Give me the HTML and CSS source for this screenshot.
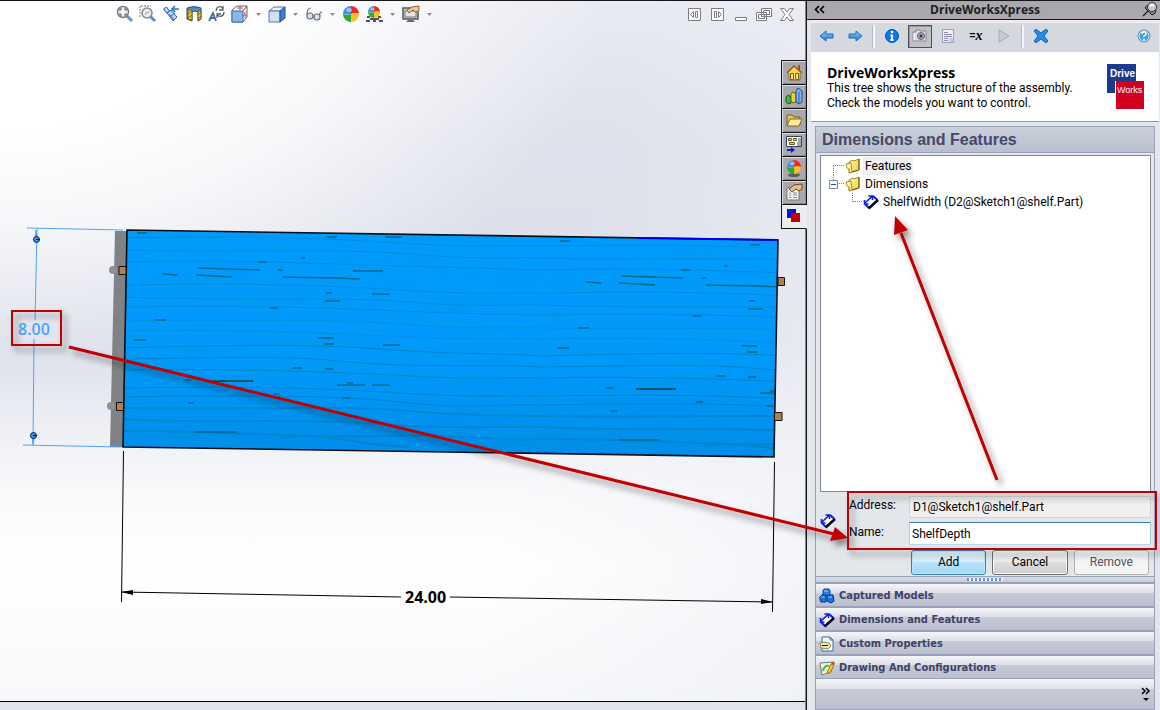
FILE: index.html
```html
<!DOCTYPE html>
<html lang="en">
<head>
<meta charset="utf-8">
<title>DriveWorksXpress</title>
<link rel="stylesheet" href="styles.css">
</head>
<body>
<svg class="defs" aria-hidden="true">
  <defs>
    <linearGradient id="blue" x1="0" y1="0" x2="0" y2="1"><stop offset="0" stop-color="#8fd0fb"/><stop offset="1" stop-color="#1874d2"/></linearGradient>
    <linearGradient id="gold" x1="0" y1="0" x2="1" y2="1"><stop offset="0" stop-color="#fffbc4"/><stop offset="1" stop-color="#eccb35"/></linearGradient>
    <symbol id="ball" viewBox="0 0 16 16">
      <path d="M8 8V0A8 8 0 0 0 0 8Q4 9 8 8" fill="#3f8fe6"/><path d="M8 8V0A8 8 0 0 1 16 8Q12 6 8 8" fill="#ee2a24"/>
      <path d="M8 8Q4 10 0 8A8 8 0 0 0 8 16Q9 12 8 8" fill="#2fa835"/><path d="M8 8Q12 6 16 8A8 8 0 0 1 8 16Q9 12 8 8" fill="#f6c21c"/>
      <ellipse cx="6" cy="4" rx="3" ry="2" fill="#fff" opacity=".45"/>
    </symbol>
    <symbol id="caret" viewBox="0 0 9 18"><path d="M2 8h5l-2.500 3z" fill="#8b8d92"/></symbol>
    <symbol id="folder" viewBox="0 0 16 16">
      <path d="M4 4l4-2 1 1 5-2v11l-10 3z" fill="url(#gold)" stroke="#a88b12"/><path d="M1 6l5-1 1 9-2 1-1-4-2-1z" fill="#fff6a0" stroke="#b0911a"/><path d="M14 1v11l-7 2" fill="none" stroke="#6b5a10"/>
    </symbol>
    <symbol id="dimension" viewBox="0 0 16 16">
      <path d="M2 10l7-7 5 4-8 7z" fill="#fff"/><path d="M2 9L9 2.500M1.500 6v4h4M5.500 2h4v4" fill="none" stroke="#0a1fe0" stroke-width="1.600"/><path d="M10 2l4.500 4M2 10l4 4" stroke="#0a1fe0" stroke-width="2"/><path d="M5.500 14.500L15 6" fill="none" stroke="#050520" stroke-width="2.600"/>
    </symbol>
    <symbol id="cube" viewBox="0 0 18 18"><path d="M1 5l5-4h10v11l-4 5H1z" fill="#f8fafc" stroke="#5c6470"/><path d="M1 6h11v11H1z" fill="#86b9ee" stroke="#3b6da8"/><path d="M12 6l4-5" stroke="#5c6470"/></symbol>
  </defs>
</svg>
<div class="app">
  <main class="viewport">
    <svg class="scene" width="806" height="700" role="img" aria-label="Shelf model with dimensions">
      <defs>
        <clipPath id="board"><path d="M127 230L778 240 774 457 123 447z"/></clipPath>
        <linearGradient id="boardFill" x1="0" y1="0" x2="0" y2="1"><stop offset="0" stop-color="#009bff"/><stop offset=".6" stop-color="#0099fc"/><stop offset="1" stop-color="#008ceb"/></linearGradient>
        <filter id="fibre" x="0" y="0" width="100%" height="100%"><feTurbulence type="fractalNoise" baseFrequency=".008 .22" numOctaves="3" seed="4"/><feColorMatrix values="0 0 0 0 0  0 0 0 0 .35  0 0 0 0 .65  1.200 0 0 0 -.42"/></filter>
        <g id="grain" fill="none">
          <g stroke="#0074a8" stroke-opacity=".55">
            <path d="M120 238c140 -2 200 0 280 5s100 2 143 3M120 250c110 3 220 -2 290 4s90 3 133 4M120 262c120 -3 200 2 280 4s100 3 143 4M120 285c140 -2 200 0 280 5s100 2 143 3M120 297c110 4 220 -1 290 5s90 2 133 3M120 307c130 -2 210 1 280 4s100 3 143 4" stroke-opacity=".35"/>
            <path d="M120 320c140 2 200 -2 280 4s100 3 143 4M120 331c110 -3 220 3 290 6s90 1 133 2" stroke-opacity=".25"/>
            <path d="M120 348c100 -3 200 -4 260 1s120 4 163 7M120 359c140 -2 170 -3 230 3s150 2 193 5M120 370c110 -2 220 2 290 6s90 1 133 2M120 388c140 -2 200 0 280 5s100 2 143 3M120 397c110 -2 220 -2 280 5s100 2 143 3"/>
            <path d="M120 408c110 2 220 -3 290 3s90 4 133 5M120 419c90 5 180 -1 260 5s110 2 163 3M120 431c100 -1 180 8 260 5s120 6 163 3M280 438c50 -6 80 8 130 9" stroke-width="2" stroke-opacity=".42"/>
          </g>
          <path stroke="#005c74" stroke-opacity=".8" stroke-width="1.400" d="M198 268l62 2M196 275l36 2M163 274l15 1M283 277l50 1 27 1M353 271h30M258 262h9M278 270h5M301 258h4M327 237h10M385 237h17M137 233h10M372 294h17M326 293h6M325 301h15M270 308h8M155 320h11M318 338h16M324 344h10M383 345h17M134 340h12M325 369h8M293 368h9M337 385h28M372 385h17M347 383h6M343 398h7M273 394h7M188 403h6M195 432h42M183 380h8"/>
          <path stroke="#005464" stroke-width="2" d="M213 381h40"/>
        </g>
      </defs>
      <path d="M115 231h12l-4 216h-13z" fill="#808285"/><circle cx="113" cy="270" r="4" fill="#8e9093"/><circle cx="111" cy="406" r="4" fill="#8e9093"/>
      <g clip-path="url(#board)">
        <path d="M120 226h660v234H120z" fill="url(#boardFill)"/>
        <rect x="120" y="228" width="660" height="232" filter="url(#fibre)" opacity=".4"/>
        <use href="#grain"/><use href="#grain" x="423" y="8"/>
      </g>
      <path d="M127 230L778 240 774 457 123 447z" fill="none" stroke="#04101c" stroke-width="1.600"/>
      <path d="M638 238l140 2" stroke="#0000e8" stroke-width="2"/>
      <g fill="#b08150" stroke="#17120c"><path d="M119 266.500h7v8h-7zM116.500 402.500h7v8h-7zM778 277.500h6.500v8H778zM774.500 412.500h7.500v8h-7.500z"/></g>
      <g stroke="#4da3ff" fill="none"><path d="M27 228L123 230M23 445L121 447M37 229L35 320M34 339L33 445"/><path d="M35 240l1-10 2 10M32 435l1 9 2-9" fill="#4da3ff"/></g>
      <g fill="#3c94f4" stroke="#071c33"><circle cx="36.500" cy="239.500" r="3"/><circle cx="33.500" cy="435.500" r="3"/><path d="M36 239.500h4M33 435.500h4"/></g>
      <text class="dim dim-selected" x="18" y="335">8.00</text>
      <g stroke="#000" fill="#000"><path d="M123.500 451L121.500 602M774.500 462L772.500 612M122 592L401 597M450 597L772 602" fill="none"/><path stroke="none" d="M121 592l12-2v5zM773 602l-12-3v5z"/></g>
      <text class="dim" x="405" y="603">24.00</text>
    </svg>
    <header class="view-bar">
      <div class="tools">
        <button class="tool" aria-label="Zoom to fit"><svg width="18" height="18"><path d="M10 10l6 6" stroke="#5f8fd0" stroke-width="3"/><circle cx="7" cy="7" r="5.500" fill="#eef3fa" stroke="#777b82" stroke-width="1.500"/><path d="M4 6V4h2M8 4h2v2M10 8v2H8M6 10H4V8" fill="none" stroke="#555"/></svg></button>
        <button class="tool" aria-label="Zoom to area"><svg width="18" height="18"><path d="M1 12V1h11" fill="none" stroke="#777" stroke-dasharray="2 1"/><path d="M11 11l5 5" stroke="#5f8fd0" stroke-width="3"/><circle cx="8" cy="8" r="5" fill="#e7ebf0" stroke="#85898f" stroke-width="1.500"/><path d="M6 9l4-2" stroke="#999"/></svg></button>
        <button class="tool" aria-label="Previous view"><svg width="18" height="18"><path d="M1.500 4l3-2 3 4-3 2zM5 8l4-3 6 7-4 4z" fill="#b5d4f5" stroke="#2a67b4"/><path d="M9 11l4-3M7 9l5 6" stroke="#2a67b4"/><path d="M17 4h-6M13 1l-3 3 3 3" fill="none" stroke="#2876d0" stroke-width="1.600"/></svg></button>
        <button class="tool" aria-label="Section view"><svg width="18" height="18"><path d="M2 3q7-3 14 0v11l-3 2V7q-3-2-6 0v9l-5-2z" fill="#4e8bd2" stroke="#284f80"/><path d="M3 5h4v10l-4-1zM13 6h3v8l-3 1z" fill="#f0ce32" stroke="#7b6510"/><path d="M3 9l4-3M3 13l4-3M13 10l3-3M13 14l3-3" stroke="#7b6510"/></svg></button>
        <button class="tool" aria-label="Dynamic annotation views"><svg width="18" height="18"><path d="M1 16l4-8 3 8M2 13h5" fill="none" stroke="#416cb0" stroke-width="1.800"/><path d="M8 6c1-6 6-5 7-2M15 1v4h-4M16 7c0 5-5 5-7 3M9 13v-4h4" fill="none" stroke="#5b5e63" stroke-width="1.300"/></svg></button>
        <button class="tool" aria-label="View orientation"><svg width="18" height="18"><use href="#cube"/><path d="M6 3h6M9 1v4M12 10h4M14 7v6" stroke="#e04848"/></svg></button>
        <button class="drop" aria-label="View orientation menu"><svg width="9" height="18"><use href="#caret"/></svg></button>
        <button class="tool" aria-label="Display style"><svg width="18" height="18"><path d="M1 6l5-4h11l-5 4z" fill="#eef6fd" stroke="#60728a"/><path d="M1 6h11v11H1z" fill="#cfe2f7" stroke="#5b7799"/><path d="M12 6l5-4v11l-5 4z" fill="#3c7edb" stroke="#284d87"/></svg></button>
        <button class="drop" aria-label="Display style menu"><svg width="9" height="18"><use href="#caret"/></svg></button>
        <button class="tool" aria-label="Hide or show items"><svg width="18" height="18"><g fill="#d9e3ec" stroke="#6b7178" stroke-width="1.200"><circle cx="5" cy="11" r="3"/><circle cx="12" cy="12" r="3"/><path d="M2 10q0-7 4-7M8 11h1M15 11q-1-4 2-4" fill="none"/></g></svg></button>
        <button class="drop" aria-label="Hide or show menu"><svg width="9" height="18"><use href="#caret"/></svg></button>
        <button class="tool" aria-label="Edit appearance"><svg width="18" height="18"><use href="#ball" x="1" y="1" width="16" height="16"/></svg></button>
        <button class="tool" aria-label="Apply scene"><svg width="18" height="18"><path d="M2 10h14l2 7H0z" fill="#eee"/><path d="M2 11h3v2H2zM8 13h3v2H8zM13 11h3v2h-3zM1 15h4v2H1zM14 15h4v2h-4zM5 13h3v2H5zM11 13h3v2h-3zM8 15h3v2H8z" fill="#555"/><use href="#ball" x="3" y="1" width="12" height="12"/></svg></button>
        <button class="drop" aria-label="Scene menu"><svg width="9" height="18"><use href="#caret"/></svg></button>
        <button class="tool" aria-label="View settings"><svg width="18" height="18"><path d="M1 3h15v11H1z" fill="#c9cbce" stroke="#55585c" stroke-width="1.500"/><path d="M3 6h11v6H3z" fill="#e4e6e9" stroke="#777"/><path d="M6 15h5l2 2H4z" fill="#666"/><path d="M5 5l5-3 7-1v5l-4 1-2-2-4 3z" fill="#eec98f" stroke="#8b6637"/></svg></button>
        <button class="drop" aria-label="View settings menu"><svg width="9" height="18"><use href="#caret"/></svg></button>
      </div>
      <div class="tools window-tools">
        <button class="tool" aria-label="Collapse left"><svg width="18" height="18"><path d="M2.500 3.500h12v12h-12zM9.500 6.500h2v6h-2zM7.500 6.500v6l-3-3z"/></svg></button>
        <button class="tool" aria-label="Collapse right"><svg width="18" height="18"><path d="M2.500 3.500h12v12h-12zM5.500 6.500h2v6h-2zM9.500 6.500v6l3-3z"/></svg></button>
        <button class="tool" aria-label="Minimize"><svg width="18" height="18"><path d="M3.500 12.500h11v3h-11z"/></svg></button>
        <button class="tool" aria-label="Restore"><svg width="18" height="18"><path d="M6.500 3.500h10v8h-10zM8.500 5.500h6v4h-6zM1.500 7.500h10v8h-10zM3.500 9.500h6v4h-6z"/></svg></button>
        <button class="tool" aria-label="Close document"><svg width="18" height="18"><path d="M2.500 3.500h4l2.500 3.500 2.500-3.500h4l-4.500 6 4.500 6h-4l-2.500-3.500-2.500 3.500h-4l4.500-6z"/></svg></button>
      </div>
    </header>
    <nav class="side-tabs" aria-label="Task pane">
      <button class="side-tab" aria-label="Resources"><svg width="18" height="18"><path d="M13 2h2v6h-2z" fill="#c23a24"/><path d="M4 9h11v8H4z" fill="#fff4b4" stroke="#806020"/><path d="M2 10l7-7 8 7" fill="#f8d44a" stroke="#8a5a10" stroke-width="1.400"/><path d="M5.500 10.500h3v6h-3zM10.500 10.500h3v6h-3z" fill="#ffe36b" stroke="#805e1b"/></svg></button>
      <button class="side-tab" aria-label="Design library"><svg width="18" height="18"><path d="M1 10l2-2 3 2v6l-3 1-2-2z" fill="#35b847" stroke="#145d21"/><path d="M6 7l2-2 3 2v8l-3 1-2-2z" fill="#f0cf3d" stroke="#74600f"/><path d="M11 4l2-3 4 3v11l-3 2-3-2z" fill="#7fb2ee" stroke="#184d86"/><path d="M14 5v11" stroke="#2665ae"/></svg></button>
      <button class="side-tab" aria-label="File explorer"><svg width="18" height="18"><path d="M2 14V4h5l2 2h6v8z" fill="#eac356" stroke="#795912"/><path d="M2 15l3-7h12l-3 7z" fill="#ffeaa4" stroke="#886718"/></svg></button>
      <button class="side-tab" aria-label="View palette"><svg width="18" height="18"><path d="M1.500 1.500h15v10h-15z" fill="#fff" stroke="#33445f"/><path d="M3.500 3.500h3v2h-3zM8.500 3.500h3v2h-3zM4.500 7.500h5v2h-5z" fill="#f4d328" stroke="#6b5d18"/><path d="M13 4h3M13 6h3M12 8h4M12 10h4" stroke="#3b5680"/><path d="M2 15h6" stroke="#0718df" stroke-width="2"/><path d="M6 12l4 3-4 3z" fill="#0718df"/></svg></button>
      <button class="side-tab" aria-label="Appearances"><svg width="18" height="18"><ellipse cx="9" cy="16" rx="6" ry="2" fill="#5d5d61"/><use href="#ball" x="2" y="1" width="14" height="14"/></svg></button>
      <button class="side-tab" aria-label="Custom properties"><svg width="18" height="18"><path d="M2 5h12v12H2z" fill="#f8f8f8" stroke="#777"/><path d="M4 10h2M8 10h4M4 12h2M8 12h4M4 14.500h2M8 14.500h4" stroke="#888"/><path d="M4 6l5-4 8-1v5l-3 2-3-2-4 3z" fill="#e8bf8c" stroke="#704724"/></svg></button>
      <button class="side-tab side-tab-active" aria-label="DriveWorksXpress"><svg width="18" height="18"><path d="M2 2h9v9H2z" fill="#0014c8"/><path d="M6 6h9v9H6z" fill="#c40000"/></svg></button>
    </nav>
    <div class="status"></div>
  </main>

  <aside class="panel">
    <header class="title-bar">
      <button class="title-button" aria-label="Collapse pane"><svg width="18" height="16"><path d="M8 4L4.500 7.500 8 11M13 4L9.500 7.500 13 11" fill="none" stroke="#000" stroke-width="1.600"/></svg></button>
      <h1>DriveWorksXpress</h1>
      <button class="title-button" aria-label="Pin pane"><svg width="18" height="18"><path d="M2 15l5-5" stroke="#222" stroke-width="1.500"/><path d="M4 7l7 7q4-1 4-5L9 4Q5 4 4 7z" fill="#878a96" stroke="#222"/><circle cx="11" cy="6" r="4.500" fill="#c9cad8" stroke="#333"/><path d="M9 5q2-2 4 0" stroke="#fff" stroke-width="2" fill="none"/></svg></button>
    </header>
    <div class="command-bar">
      <button class="cmd" aria-label="Back"><svg width="18" height="18"><path d="M2 9l6-5v3h7v4H8v3z" fill="url(#blue)" stroke="#1c69c0"/></svg></button>
      <button class="cmd" aria-label="Forward"><svg width="18" height="18"><path d="M16 9l-6-5v3H3v4h7v3z" fill="url(#blue)" stroke="#1c69c0"/></svg></button>
      <span class="sep"></span>
      <button class="cmd" aria-label="Information"><svg width="18" height="18"><circle cx="9" cy="9" r="6.500" fill="#0878e3" stroke="#0056b8"/><path d="M9 7.500v6M7.500 8.500h2M7.500 13h3" stroke="#fff" stroke-width="1.800"/><circle cx="9" cy="5" r="1.300" fill="#fff"/></svg></button>
      <button class="cmd cmd-pressed" aria-label="Capture"><svg width="18" height="18"><path d="M2 5h3V3h4v1h6v10H2z" fill="#dedde5" stroke="#8b8994"/><circle cx="10" cy="9" r="3.500" fill="#aaa9b2" stroke="#666"/><circle cx="10" cy="9" r="1.500" fill="#333"/><path d="M3 6v7" stroke="#fff"/></svg></button>
      <button class="cmd" aria-label="Form"><svg width="18" height="18"><path d="M3.500 2.500h11v13h-11z" fill="#f0effa" stroke="#a19fc0"/><path d="M5 5.500h4M5 7.500h8M5 9.500h8M5 11.500h4M5 13.500h4" stroke="#8b89b5"/><path d="M10 11h4v4h-4z" fill="#c9c8de"/></svg></button>
      <button class="cmd cmd-rule" aria-label="Rules">=<i>x</i></button>
      <button class="cmd" aria-label="Run" disabled><svg width="18" height="18"><path d="M4 3l10 6-10 6z" fill="#c7cacf" stroke="#abadb1"/></svg></button>
      <span class="sep"></span>
      <button class="cmd" aria-label="Close"><svg width="18" height="18"><path d="M2 4l2-2 5 4 5-4 2 2-4 5 4 5-2 2-5-4-5 4-2-2 4-5z" fill="#238be8" stroke="#0d64bd"/></svg></button>
      <button class="cmd cmd-help" aria-label="Help"><svg width="18" height="18"><circle cx="9" cy="9" r="6" fill="#399bea" stroke="#6d8499"/><circle cx="9" cy="9" r="5" fill="none" stroke="#dceefa"/><path d="M7 7q0-2 2-2t2 2q0 1-2 2v1M9 11.500v1.500" fill="none" stroke="#fff" stroke-width="1.500"/></svg></button>
    </div>
    <section class="intro">
      <div>
        <h2>DriveWorksXpress</h2>
        <p>This tree shows the structure of the assembly.<br>Check the models you want to control.</p>
      </div>
      <svg class="logo" width="38" height="46" role="img" aria-label="Drive Works"><path d="M0 0h29v29H0z" fill="#1d3b8b"/><path d="M8 17h30v28H8z" fill="#fff"/><path d="M9 17h28v28H9z" fill="#d2001f"/><text x="3" y="13">Drive</text><text class="logo-works" x="10" y="29">Works</text></svg>
    </section>

    <section class="box">
      <h3 class="box-title">Dimensions and Features</h3>
      <div class="box-body">
        <ul class="tree">
          <li class="node"><svg class="lines" width="24" height="18"><path d="M12.500 9v9M12 8.500h12"/></svg><svg width="16" height="16"><use href="#folder"/></svg><span class="node-text node-hot">Features</span></li>
          <li class="node"><svg class="lines" width="24" height="18"><path d="M12.500 0v5M18 8.500h6"/><path class="expander" d="M8.500 5.500h8v8h-8z"/><path class="expander minus" d="M10 9.500h5"/></svg><svg width="16" height="16"><use href="#folder"/></svg><span class="node-text">Dimensions</span></li>
          <li class="node"><svg class="lines" width="42" height="18"><path d="M31.500 0v9M32 8.500h10"/></svg><svg width="16" height="16"><use href="#dimension"/></svg><span class="node-text">ShelfWidth (D2@Sketch1@shelf.Part)</span></li>
        </ul>
        <form class="form">
          <svg class="form-icon" width="16" height="16"><use href="#dimension"/></svg>
          <label for="address">Address:</label><input class="field field-readonly" id="address" value="D1@Sketch1@shelf.Part" readonly>
          <label for="name">Name:</label><input class="field field-name" id="name" value="ShelfDepth">
          <div class="actions"><button class="btn btn-default" type="button">Add</button><button class="btn" type="button">Cancel</button><button class="btn" type="button" disabled>Remove</button></div>
        </form>
      </div>
      <div class="splitter"><span class="grip"></span></div>
      <nav class="stack">
        <button class="stack-item"><svg width="16" height="16"><path d="M5 1h5l1 2v5H4V3z" fill="#2580e8" stroke="#0b3f91"/><path d="M1 9l2-2h4v7H2l-1-2zM8 9l2-2h4l1 6-3 2-4-2z" fill="#1777e8" stroke="#082f7c"/><path d="M5 3h4M2 9h4M9 9h4" stroke="#8ed0ff"/></svg>Captured Models</button>
        <button class="stack-item"><svg width="16" height="16"><use href="#dimension"/></svg>Dimensions and Features</button>
        <button class="stack-item"><svg width="16" height="16"><path d="M3 1h8l3 3v11H3z" fill="#f5faff" stroke="#386ca6"/><path d="M11 1v3h3" fill="none" stroke="#386ca6"/><path d="M1 7l4-1 5 1 2 3-3 3-7-1z" fill="#e9e7a4" stroke="#8a8950"/><path d="M3 9.500h6" stroke="#222"/></svg>Custom Properties</button>
        <button class="stack-item"><svg width="16" height="16"><path d="M1 3l14-1-3 10-9 3z" fill="#edf3e9" stroke="#777"/><path d="M4 11q1-6 6-5" fill="none" stroke="#4dbb32" stroke-width="2"/><path d="M8 13l4-9 3 1-4 8z" fill="#f5cc24" stroke="#a07814"/><path d="M12 4l1-2 3 1-1 2z" fill="#d34232"/></svg>Drawing And Configurations</button>
      </nav>
      <footer class="overflow"><button class="more" aria-label="More groups"><svg width="14" height="16"><path d="M3 2l3 3-3 3M7 2l3 3-3 3" fill="none" stroke="#000" stroke-width="1.500"/><path d="M4 12h6l-3 3z"/></svg></button></footer>
    </section>
  </aside>

  <svg class="callouts" width="1160" height="710" aria-hidden="true">
    <g fill="none" stroke="#c00000"><path d="M12 311h49v34H12zM848 492h308v57H848z" stroke-width="2"/><path d="M69 347L834 534M997 480L901 233" stroke-width="3"/></g>
    <path d="M848 538l-18 3 5-14zM895 216l13 14-14 5z" fill="#c00000"/>
  </svg>
</div>
</body>
</html>
```
FILE: styles.css
```css
* { box-sizing: border-box; }
body { margin: 0; font: 12px/15px Roboto, "Noto Sans", sans-serif; color: #000; }
button { margin: 0; padding: 0; border: 0; background: none; font: inherit; color: inherit; }
h1, h2, h3, p, ul { margin: 0; padding: 0; }
svg { display: block; flex: none; }
.defs { position: absolute; width: 0; height: 0; }

.app { position: relative; display: grid; grid-template-columns: minmax(0, 1fr) 354px; min-height: 100vh; overflow: hidden; border-top: 1px solid #16161a; }

/* Model viewport */
.viewport {
  position: relative; display: flex; flex-direction: column; justify-content: space-between; border-right: 1px solid #85868a;
  background:
    radial-gradient(ellipse 75% 52% at 0 0, #fff 35%, rgba(255,255,255,.75) 60%, rgba(255,255,255,0) 100%),
    linear-gradient(285deg, rgba(240,241,246,.8) 0%, rgba(240,241,246,0) 35%),
    linear-gradient(180deg, #e9ebf2 0%, #dfe1eb 20%, #dcdfea 48%, #eceef4 59%, #fafafc 70%, #fff 80%, #f7f8fa 100%);
}
.scene { position: absolute; left: 0; top: -1px; }
.dim { font: bold 16px "Open Sans", sans-serif; }
.dim-selected { fill: #4da3ff; font-weight: 600; }
.view-bar { position: relative; display: flex; justify-content: space-between; padding: 4px 9px 0 116px; }
.tools { display: flex; gap: 5px; }
.tool { width: 18px; height: 18px; }
.drop { width: 9px; height: 18px; }
.window-tools path { fill: #fdfdfd; stroke: #7d7f85; }
.side-tabs { position: absolute; right: -2px; top: 59px; z-index: 2; display: flex; flex-direction: column; width: 26px; border-left: 1px solid #16161a; border-top: 1px solid #16161a; }
.side-tab { display: flex; align-items: center; justify-content: center; height: 24px; padding-bottom: 1px; background: #a9a9ad; border-bottom: 1px solid #16161a; border-right: 1px solid #16161a; box-shadow: inset 1px 1px #dedee2, inset -1px -1px #88888c; }
.side-tab-active { background: #ededf0; border-right-color: #ededf0; box-shadow: none; }
.status { height: 9px; background: #e1e4ea; border-top: 1px solid #000; }

/* Task pane */
.panel { display: flex; flex-direction: column; min-width: 0; border-left: 1px solid #16161a; background: #e3e6eb; }
.title-bar { display: flex; justify-content: space-between; align-items: center; height: 19px; padding: 0 1px 0 4px; background: #a9a9ad; border-bottom: 1px solid #16161a; }
.title-bar h1 { font: bold 12px/16px "Open Sans", "Noto Sans", sans-serif; color: #1d1d22; }
.title-button { width: 18px; height: 18px; }
.command-bar { display: flex; align-items: center; gap: 4px; height: 32px; margin: 0 1px 0 4px; padding: 0 3px 3px 4px; background: #d5d9df; border-top: 3px solid #efebf1; }
.cmd { display: flex; align-items: center; justify-content: center; width: 24px; height: 23px; }
.cmd-pressed { background: #bec2c7; border: 1px solid #4e5256; box-shadow: inset 1px 1px #94989d; }
.cmd-rule { font: bold 10px/12px "Liberation Sans", sans-serif; }
.cmd-rule i { font: italic bold 14px/12px "Liberation Serif", serif; }
.cmd-help { margin-left: auto; }
.sep { width: 5px; height: 23px; background: linear-gradient(90deg, transparent 1px, #b5bac2 1px, #b5bac2 2px, #f6f7f9 2px, #f6f7f9 4px, transparent 4px); }
.intro { display: flex; justify-content: space-between; height: 70px; margin: 0 1px 0 4px; padding: 12px 14px 0 16px; background: #fff; border-bottom: 1px solid #98999d; }
.intro h2 { font: bold 14px/17px "Open Sans", "Noto Sans", sans-serif; }
.logo text { font: bold 10px "Liberation Sans Narrow", "Liberation Sans", sans-serif; fill: #fff; }
.logo .logo-works { font-weight: normal; font-size: 9px; }

.box { flex: 1; display: flex; flex-direction: column; margin: 4px 5px 0 8px; border: 1px solid #9ba0bc; }
.box-title { height: 26px; padding-left: 6px; font: bold 16px/25px "Liberation Sans", sans-serif; color: #44486a; background: linear-gradient(#cbd0dd, #b9bfcc); border: 1px solid #9ba0bc; border-width: 0 0 1px; }
.box-body { flex: 1; display: flex; flex-direction: column; padding: 2px 3px 0 4px; }
.tree { flex: 1; padding-top: 1px; list-style: none; background: #fff; border: 1px solid #828790; }
.node { display: flex; align-items: center; height: 18px; }
.node-text { margin-left: 2px; padding: 0 2px; line-height: 18px; }
.node-hot { background: #f0f0f0; }
.lines path { fill: none; stroke: #808080; stroke-dasharray: 1 1; }
.lines .expander { fill: #fff; stroke: #7f8ba0; stroke-dasharray: none; }
.lines .minus { stroke: #24469a; }

.form { display: grid; grid-template-columns: 29px 60px minmax(0, 1fr); row-gap: 4px; align-items: center; padding: 4px 0 1px; }
.form-icon { grid-row: 1 / 3; }
.form label { grid-column: 2; padding-bottom: 3px; }
.field { grid-column: 3; width: 100%; height: 23px; padding: 0 2px; font: inherit; color: #000; background: #fff; border: 1px solid #3d7bad; border-color: #3d7bad #a4c9e3 #b7d9ed #b5cfe7; outline: 0; }
.field-readonly { height: 22px; padding-left: 3px; background: #f0f0f0; border-color: #d5d5d8; }
.actions { grid-column: 3; display: flex; gap: 6px; padding: 1px 2px 0; }
.btn { flex: 1; height: 25px; border: 1px solid #707070; border-radius: 3px; background: linear-gradient(#f2f2f2, #ebebeb 50%, #ddd 50%, #cfcfcf); box-shadow: inset 0 0 0 1px #f7f7f7; }
.btn-default { border-color: #3c7fb1; background: linear-gradient(#e8f5fc, #d8effb 50%, #b7e3f9 50%, #a3d8f3); box-shadow: inset 0 0 0 1px #bce9fb; }
.btn:disabled { color: #55555c; border-color: #adb2b5; background: #f4f4f4; }
.splitter { display: flex; justify-content: center; align-items: center; height: 6px; border-top: 1px solid #9ba0bc; background: linear-gradient(#d8dce5, #c8cdd9); }
.grip { width: 36px; height: 3px; background: repeating-linear-gradient(90deg, #6593cf 0 2px, #eef3fa 2px 4px); }
.stack { display: flex; flex-direction: column; }
.stack-item { display: flex; align-items: center; gap: 4px; height: 24px; padding: 1px 0 0 3px; font: bold 11px/16px "DejaVu Sans Condensed", "DejaVu Sans", sans-serif; font-stretch: condensed; color: #3e4265; text-align: left; border-top: 2px solid #9ba0bc; background: linear-gradient(#f5f6f9, #dcdfe6 40%, #c7cbd7 40%, #bcc0cc); }
.overflow { display: flex; justify-content: flex-end; align-items: center; height: 31px; padding-right: 1px; border-top: 1px solid #9ba0bc; background: linear-gradient(#f5f6f9, #dcdfe6 35%, #c7cbd7 35%, #bcc0cc); }
.more { width: 14px; height: 16px; }

/* Annotation layer over the whole window */
.callouts { position: absolute; left: 0; top: -1px; z-index: 3; pointer-events: none; filter: drop-shadow(4px 5px 3px rgba(0,0,0,.45)); }
```
